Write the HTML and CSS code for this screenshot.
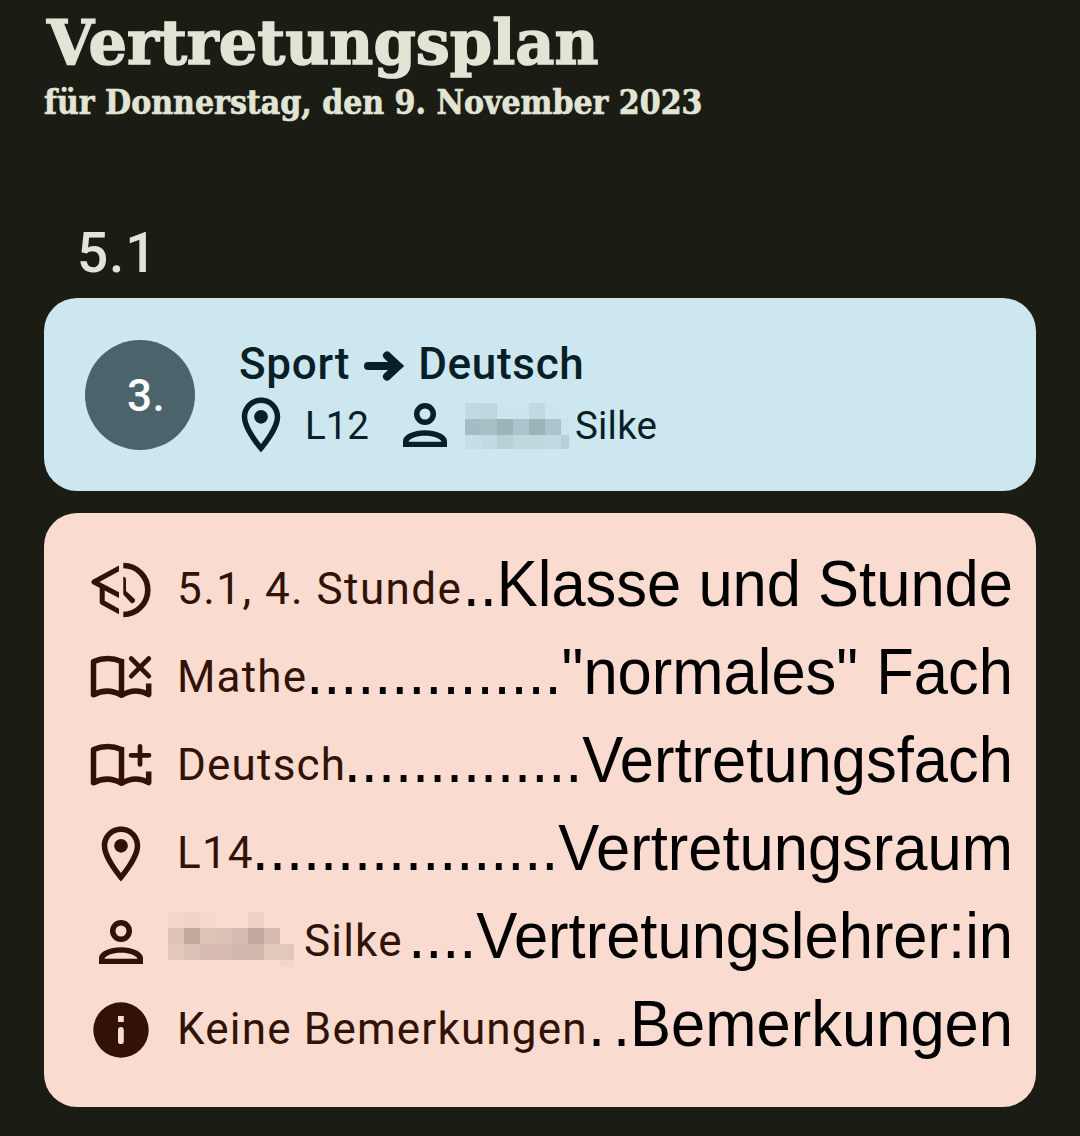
FILE: index.html
```html
<!DOCTYPE html>
<html lang="de">
<head>
<meta charset="utf-8">
<title>Vertretungsplan</title>
<link rel="stylesheet" href="styles.css">
</head>
<body>
<svg class="defs" width="0" height="0" aria-hidden="true">
  <symbol id="pin" viewBox="0 0 24 24">
    <path fill="currentColor" fill-rule="evenodd" d="M12 2C8.13 2 5 5.13 5 9c0 5.25 7 13 7 13s7-7.75 7-13c0-3.87-3.13-7-7-7zM7 9c0-2.76 2.24-5 5-5s5 2.24 5 5c0 2.88-2.88 7.19-5 9.88C9.92 16.21 7 11.85 7 9z"/>
    <circle cx="12" cy="9" r="2.5" fill="currentColor"/>
  </symbol>
  <symbol id="person" viewBox="0 0 24 24">
    <circle cx="12" cy="8" r="3" fill="none" stroke="currentColor" stroke-width="2"/>
    <path fill="currentColor" fill-rule="evenodd" d="M4 20v-2.1c0-2.5 4-4 8-4s8 1.500 8 4V20zM6 18.1h12c-.3-1.200-3-2.200-6-2.200s-5.700 1-6 2.200z"/>
  </symbol>
  <symbol id="book" viewBox="0 0 66 66">
    <g fill="none" stroke="currentColor" stroke-width="5.500" stroke-linejoin="round">
      <path d="M33.6 16.500Q19.700 10.700 5.500 16.500V49.800Q19.700 42.200 33.500 50.300Q47.200 42.200 60.700 49.500V38.500"/>
      <path d="M33.500 14V50.500"/>
    </g>
  </symbol>
</svg>
<header class="header">
  <h1 class="title"><span class="title-text">Vertretungsplan</span></h1>
  <p class="subtitle"><span class="subtitle-text">für Donnerstag, den 9. November 2023</span></p>
</header>
<main class="plan">
  <h2 class="group">5.1</h2>
  <section class="card lesson">
    <div class="period">3.</div>
    <div class="details">
      <div class="change">
        <span>Sport</span>
        <svg class="arrow" viewBox="0 0 44 32" width="44" height="32"><g fill="none" stroke="currentColor" stroke-width="8" stroke-linecap="round"><path d="M6 16H34"/><path d="M25 5.500L36.300 16L25 26.500"/></g></svg>
        <span>Deutsch</span>
      </div>
      <div class="meta">
        <svg class="icon"><use href="#pin"/></svg>
        <span class="room">L12</span>
        <svg class="icon"><use href="#person"/></svg>
        <svg class="mosaic" width="104" height="46" shape-rendering="crispEdges">
          <path fill="#c0d9e3" d="M0 0h16v16H0zM64 0h16v16H64z"/><path fill="#bed7df" d="M16 0h16v16H16z"/><path fill="#cbe5ee" d="M32 0h32v16H32zM80 0h16v16H80z"/>
          <path fill="#a4bcc5" d="M0 16h16v16H0z"/><path fill="#a7bfc5" d="M16 16h16v16H16z"/><path fill="#9db3ba" d="M32 16h16v16H32zM64 16h16v16H64z"/><path fill="#abc3ca" d="M48 16h16v16H48zM80 16h16v16H80z"/><path fill="#cae5ee" d="M96 16h8v16h-8z"/>
          <path fill="#c5dfe7" d="M0 32h16v14H0z"/><path fill="#c1dae1" d="M16 32h16v14H16zM80 32h16v14H80z"/><path fill="#b8d1d6" d="M32 32h16v14H32zM96 32h8v14h-8z"/><path fill="#bed8de" d="M48 32h32v14H48z"/>
        </svg>
        <span class="teacher">Silke</span>
      </div>
    </div>
  </section>
  <section class="card legend">
    <div class="row">
      <svg class="icon" viewBox="0 0 66 66">
        <clipPath id="half"><rect width="31" height="66"/></clipPath>
        <g fill="none" stroke="currentColor">
          <path stroke-width="5.600" d="M35.300 8.500A24.500 24.500 0 0 1 35.300 57.500"/>
          <g clip-path="url(#half)" stroke-width="5" stroke-linejoin="round"><path d="M35 9.200L6 25L35 40.300"/><path d="M14.200 29V45.200L35 56.700"/></g>
        </g>
        <path fill="currentColor" d="M35.300 19.600q2.700 .5 2.700 3V34l8.200 7.400a2.600 2.600 0 0 1-3.800 3.800L35.300 37.500z"/>
      </svg>
      <span class="label loose">5.1, 4. Stunde</span>
      <span class="note"><span class="dots">..</span>Klasse und Stunde</span>
    </div>
    <div class="row">
      <svg class="icon" viewBox="0 0 66 66"><use href="#book"/><path class="mark" d="M43.200 13.500L60.800 31.200M60.800 13.500L43.200 31.200"/></svg>
      <span class="label">Mathe</span>
      <span class="note quoted"><span class="dots">...............</span>"normales" Fach</span>
    </div>
    <div class="row">
      <svg class="icon" viewBox="0 0 66 66"><use href="#book"/><path class="mark" d="M52 13.300V31.400M43 22.300H61"/></svg>
      <span class="label">Deutsch</span>
      <span class="note"><span class="dots">..............</span>Vertretungsfach</span>
    </div>
    <div class="row">
      <svg class="icon"><use href="#pin"/></svg>
      <span class="label">L14</span>
      <span class="note"><span class="dots">..................</span>Vertretungsraum</span>
    </div>
    <div class="row">
      <svg class="icon"><use href="#person"/></svg>
      <svg class="mosaic" width="126" height="55" shape-rendering="crispEdges">
        <path fill="#f3d5ca" d="M0 0h16v16H0zM112 48h14v7h-14z"/><path fill="#f1d5c9" d="M16 0h16v16H16z"/><path fill="#f6d8cd" d="M32 0h16v16H32z"/><path fill="#efd2c6" d="M80 0h16v16H80z"/>
        <path fill="#dfc4b8" d="M0 16h16v16H0zM32 16h16v16H32z"/><path fill="#c3a89e" d="M16 16h16v16H16zM80 16h16v16H80z"/><path fill="#dcc2b6" d="M48 16h16v16H48z"/><path fill="#d6bcb0" d="M64 16h16v16H64zM96 16h16v16H96z"/>
        <path fill="#e2c7bb" d="M0 32h16v16H0zM96 32h30v16H96z"/><path fill="#dcc2b6" d="M16 32h16v16H16z"/><path fill="#d7bbb1" d="M32 32h32v16H32z"/><path fill="#d2b7ac" d="M64 32h32v16H64z"/>
      </svg>
      <span class="label">Silke</span>
      <span class="note"><span class="dots">....</span>Vertretungslehrer:in</span>
    </div>
    <div class="row">
      <svg class="icon" viewBox="0 0 66 66"><path fill="currentColor" fill-rule="evenodd" d="M33 5.300a27.700 27.700 0 1 0 0 55.400a27.700 27.700 0 0 0 0-55.400zM30 19h5.800v6H30zM32.900 30a2.900 2.900 0 0 1 2.900 2.900V44.200a2.900 2.900 0 0 1-5.800 0V32.900a2.900 2.900 0 0 1 2.900-2.900z"/></svg>
      <span class="label">Keine Bemerkungen</span>
      <span class="note"><span class="dots wide">.</span><span class="dots">.</span>Bemerkungen</span>
    </div>
  </section>
</main>
</body>
</html>
```
FILE: styles.css
```css
* { box-sizing: border-box; }
body {
  margin: 0;
  height: 1136px;
  overflow: hidden;
  background: #1b1d15;
  color: #e2e5d5;
  font-family: Roboto, sans-serif;
}
h1, h2, p { margin: 0; }
.defs { display: block; height: 0; }
.header { height: 218px; padding: 6px 44px 0; font-family: "DejaVu Serif", serif; font-weight: 700; }
.title { height: 77px; padding-left: 3px; font-size: 62px; line-height: 74px; white-space: nowrap; }
.subtitle { height: 40px; font-size: 33px; line-height: 40px; white-space: nowrap; }
.title-text, .subtitle-text { display: inline-block; transform-origin: 0 50%; }
.title-text { transform: scaleX(.977); -webkit-text-stroke: 1.500px currentColor; }
.subtitle-text { transform: scaleX(.911); -webkit-text-stroke: .7px currentColor; }
.plan { padding: 0 44px; }
.group { height: 80px; padding-left: 33px; font-size: 55px; line-height: 70px; font-weight: 500; letter-spacing: .8px; }
.card { border-radius: 33px; }
.lesson {
  display: flex;
  height: 193px;
  margin-bottom: 22px;
  padding: 42px 41px;
  background: #cde7f0;
  color: #071f26;
}
.period {
  width: 110px;
  height: 110px;
  padding-left: 12px;
  border-radius: 50%;
  background: #4b636b;
  color: #fff;
  font-size: 44px;
  font-weight: 500;
  line-height: 113px;
  text-align: center;
  letter-spacing: .4px;
}
.details { padding-left: 44px; }
.change { display: flex; align-items: center; height: 49px; font-size: 44px; font-weight: 500; line-height: 49px; letter-spacing: .7px; }
.arrow { margin: 2px 12px 0 12px; }
.meta { display: flex; align-items: center; height: 72px; margin-left: -11px; font-size: 38.500px; }
.meta .mosaic { margin: 1px 6px 0 7px; }
.room { width: 87px; margin-left: 11px; }
.teacher { letter-spacing: .2px; }
.icon { display: block; flex: none; width: 66px; height: 66px; }
.mark { fill: none; stroke: currentColor; stroke-width: 4.700; stroke-linecap: round; }
.mosaic { display: block; flex: none; }
.legend { height: 594px; padding: 33px 23px 33px 44px; background: #f9dbd0; color: #321204; }
.row { display: flex; align-items: center; height: 88px; white-space: nowrap; }
.label { margin-right: -30px; padding: 0 0 1px 23px; font-size: 44px; line-height: 87px; letter-spacing: 1.200px; }
.loose { letter-spacing: 1.450px; }
.row .mosaic { margin: -6px -13px 0 14px; }
.note {
  margin-left: auto;
  padding-bottom: 12px;
  color: #000;
  font: 61.500px/76px "Liberation Sans", Arial, sans-serif;
  transform: scaleY(1.066);
}
.quoted { word-spacing: 1px; }
.dots { letter-spacing: -.060px; }
.wide { letter-spacing: 8px; }
```
